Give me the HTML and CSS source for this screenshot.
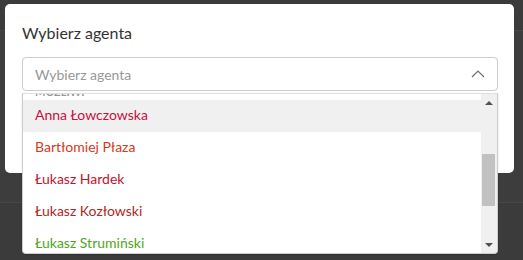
FILE: index.html
```html
<!DOCTYPE html>
<html lang="pl">
<head>
<meta charset="utf-8">
<link rel="stylesheet" href="styles.css">
</head>
<body>
<div class="modal">
  <h2 class="title">Wybierz agenta</h2>
  <div class="field">
    <div class="select">
      <span class="placeholder">Wybierz agenta</span>
      <svg class="chev" width="14" height="9" viewBox="0 0 14 9"><polyline points="1,8 7,2 13,8" fill="none" stroke="#707070" stroke-width="1.2"/></svg>
    </div>
    <div class="menu">
      <div class="options">
        <div class="group">Możliwi</div>
        <div class="opt active c1">Anna Łowczowska</div>
        <div class="opt c2">Bartłomiej Płaza</div>
        <div class="opt c3">Łukasz Hardek</div>
        <div class="opt c4">Łukasz Kozłowski</div>
        <div class="opt c5">Łukasz Strumiński</div>
      </div>
      <div class="scrollbar">
        <div class="arrow up"></div>
        <div class="track"><div class="thumb"></div></div>
        <div class="arrow down"></div>
      </div>
    </div>
  </div>
</div>
</body>
</html>
```
FILE: styles.css
```css
html, body {
  margin: 0;
  padding: 0;
}
body {
  width: 523px;
  height: 260px;
  overflow: hidden;
  background: linear-gradient(to bottom, #3b3b3b 0, #3b3b3b 30px, #474747 30px, #474747 31px, #3d3d3d 31px, #3d3d3d 202px, #474747 202px, #474747 203px, #3b3b3b 203px);
  font-family: Lato, "Open Sans", sans-serif;
  padding-top: 4px;
  padding-left: 5px;
  box-sizing: border-box;
}
.modal {
  width: 509px;
  height: 169px;
  background: #fff;
  border-radius: 5px;
  box-sizing: border-box;
  padding: 18px 16px 0 17px;
}
.title {
  margin: 0;
  font-size: 16px;
  font-weight: 400;
  line-height: 22px;
  color: #333;
}
.field {
  position: relative;
  margin-top: 13px;
}
.select {
  height: 34px;
  box-sizing: border-box;
  border: 1px solid #ccc;
  border-radius: 4px;
  display: flex;
  align-items: center;
  justify-content: space-between;
  padding: 0 12px 0 12px;
}
.placeholder {
  font-size: 14px;
  color: #999;
}
.chev {
  margin-top: -2px;
}
.menu {
  position: absolute;
  left: 0;
  right: 0;
  top: 36px;
  height: 161px;
  box-sizing: border-box;
  border: 1px solid #ccc;
  border-top-color: #e0e0e0;
  border-radius: 0 0 4px 4px;
  background: #fff;
  box-shadow: 0 1px 2px rgba(0,0,0,0.15);
  display: flex;
  overflow: hidden;
}
.options {
  flex: 1;
  overflow: hidden;
}
.group {
  margin-top: -9px;
  height: 15px;
  line-height: 14px;
  padding-left: 12px;
  font-size: 11px;
  font-weight: 700;
  text-transform: uppercase;
  color: #999;
}
.opt {
  height: 32px;
  line-height: 30px;
  padding-left: 12px;
  font-size: 14px;
  white-space: nowrap;
}
.opt.active { background: #f0f0f0; }
.c1 { color: #c8103e; }
.c2 { color: #d23a1c; }
.c3 { color: #c4122e; }
.c4 { color: #b3261c; }
.c5 { color: #4fa61c; }
.scrollbar {
  width: 16px;
  background: #f0f0f0;
  display: flex;
  flex-direction: column;
}
.arrow {
  height: 17px;
  display: flex;
  align-items: center;
  justify-content: center;
}
.arrow::before {
  content: "";
  width: 0;
  height: 0;
  border-left: 4px solid transparent;
  border-right: 4px solid transparent;
}
.arrow.up::before { border-bottom: 4px solid #505050; }
.arrow.down::before { border-top: 4px solid #505050; }
.track {
  flex: 1;
  padding-top: 43px;
}
.thumb {
  margin: 0 2px 0 1px;
  height: 52px;
  background: #c1c1c1;
}
```
